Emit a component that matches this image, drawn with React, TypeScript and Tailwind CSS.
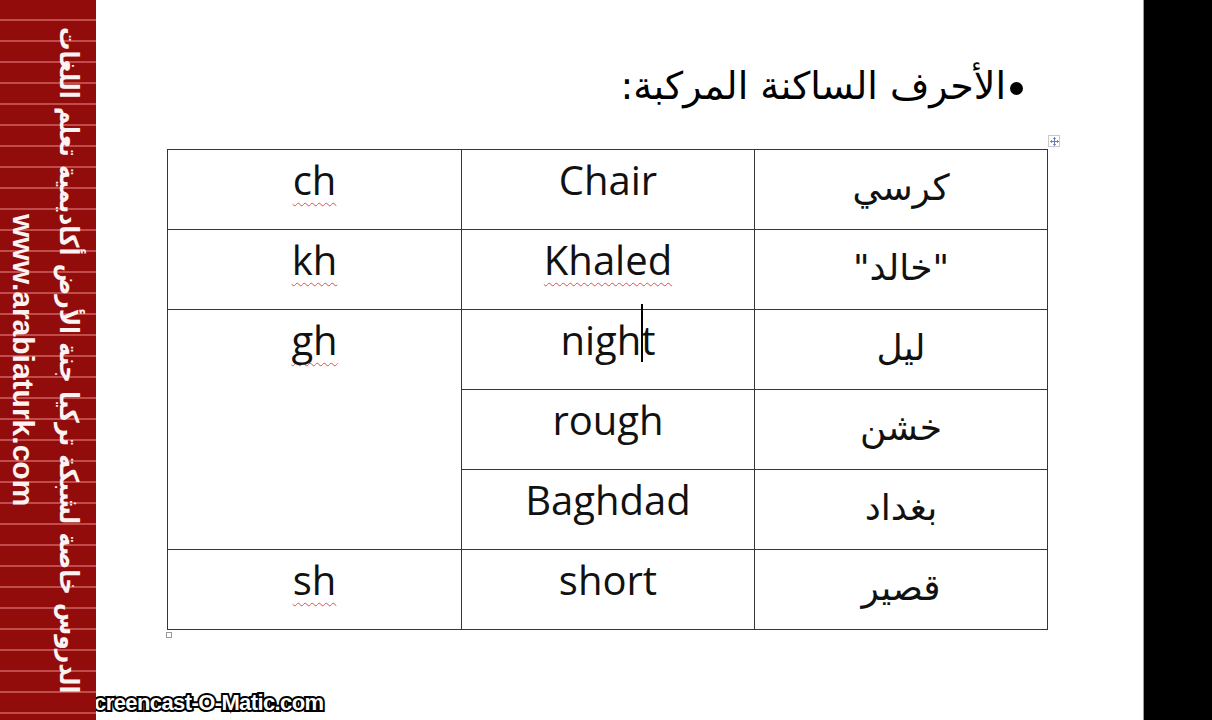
const squiggle =
  "underline decoration-wavy decoration-[#d9534f] decoration-1 underline-offset-[7px] [text-decoration-skip-ink:none]";

function EnCell({ text, wavy }: { text: string; wavy?: boolean }) {
  return <span className={wavy ? squiggle : ""}>{text}</span>;
}

function Sidebar() {
  return (
    <aside className="relative z-10 flex h-full w-[96px] shrink-0 flex-row items-stretch gap-[9px] bg-[repeating-linear-gradient(180deg,#930c0c_0px,#930c0c_19px,#c24b4b_19px,#c24b4b_21px)] pl-[8px] text-[#fdf2f2]">
      <div className="flex h-full w-[30px] items-center justify-center whitespace-nowrap font-['Liberation_Sans',sans-serif] text-[30px] font-bold leading-none [writing-mode:vertical-rl]">
        www.arabiaturk.com
      </div>
      <div
        dir="rtl"
        className="flex h-full w-[44px] items-center justify-center whitespace-nowrap font-['DejaVu_Sans_Condensed','DejaVu_Sans',sans-serif] text-[26px] font-bold leading-none [writing-mode:vertical-rl]"
      >
        الدروس خاصة لشبكة تركيا جنة الأرض أكاديمية تعلم اللغات
      </div>
    </aside>
  );
}

function TableHandle() {
  return (
    <span className="absolute right-[-13px] top-[-14px] flex h-[12px] w-[12px] items-center justify-center border border-[#c9c9c9] bg-white">
      <svg width="9" height="9" viewBox="0 0 9 9" fill="none" stroke="#5b7fb5" strokeWidth="1">
        <path d="M4.5 0.5v8M0.5 4.5h8" />
        <path d="M3.2 1.8l1.3-1.3 1.3 1.3M3.2 7.2l1.3 1.3 1.3-1.3M1.8 3.2L0.5 4.5l1.3 1.3M7.2 3.2l1.3 1.3-1.3 1.3" />
      </svg>
    </span>
  );
}

export default function App() {
  const td = "h-[80px] border border-[#363636] p-0 text-center align-top";
  const en = "font-['Open_Sans',sans-serif] text-[40px] leading-[48px] pt-[6px] text-[#111]";
  const ar = "font-['DejaVu_Sans',sans-serif] text-[36px] leading-[48px] pt-[14px] text-[#111]";

  return (
    <div className="relative flex h-[720px] w-[1212px] overflow-hidden bg-black">
      <Sidebar />

      <main className="flex h-full w-[1048px] flex-col border-r border-[#9a9a9a] bg-white">
        <div className="flex h-[149px] justify-end pr-[120px] pt-[62px]">
          <p dir="rtl" className="font-['DejaVu_Sans',sans-serif] text-[38px] leading-[48px] text-black">
            <span className="ml-[4px] inline-block h-[13px] w-[13px] rounded-full bg-black align-middle" />
            الأحرف الساكنة المركبة:
          </p>
        </div>

        <div className="relative ml-[71px] w-[880px]">
          <TableHandle />
          <table className="w-[880px] table-fixed border-collapse">
            <colgroup>
              <col className="w-[294px]" />
              <col className="w-[293px]" />
              <col className="w-[293px]" />
            </colgroup>
            <tbody>
              <tr>
                <td className={`${td} ${en}`}>
                  <EnCell text="ch" wavy />
                </td>
                <td className={`${td} ${en}`}>
                  <EnCell text="Chair" />
                </td>
                <td dir="rtl" className={`${td} ${ar}`}>
                  كرسي
                </td>
              </tr>
              <tr>
                <td className={`${td} ${en}`}>
                  <EnCell text="kh" wavy />
                </td>
                <td className={`${td} ${en}`}>
                  <EnCell text="Khaled" wavy />
                </td>
                <td dir="rtl" className={`${td} ${ar}`}>
                  "خالد"
                </td>
              </tr>
              <tr>
                <td rowSpan={3} className={`${td} ${en}`}>
                  <EnCell text="gh" wavy />
                </td>
                <td className={`${td} ${en}`}>
                  nigh
                  <span className="relative">
                    <span className="absolute left-0 top-[-8px] h-[58px] w-[2px] bg-black" />
                  </span>
                  t
                </td>
                <td dir="rtl" className={`${td} ${ar}`}>
                  ليل
                </td>
              </tr>
              <tr>
                <td className={`${td} ${en}`}>rough</td>
                <td dir="rtl" className={`${td} ${ar}`}>
                  خشن
                </td>
              </tr>
              <tr>
                <td className={`${td} ${en}`}>Baghdad</td>
                <td dir="rtl" className={`${td} ${ar}`}>
                  بغداد
                </td>
              </tr>
              <tr>
                <td className={`${td} ${en}`}>
                  <EnCell text="sh" wavy />
                </td>
                <td className={`${td} ${en}`}>short</td>
                <td dir="rtl" className={`${td} ${ar}`}>
                  قصير
                </td>
              </tr>
            </tbody>
          </table>
          <span className="absolute bottom-[-8px] left-[-1px] h-[6px] w-[6px] border border-[#9a9a9a] bg-white" />
        </div>
      </main>

      <div className="absolute bottom-[6px] left-[80px] font-['Liberation_Sans',sans-serif] text-[22px] font-bold leading-none tracking-[-0.6px] text-white [-webkit-text-stroke:4px_#000] [paint-order:stroke_fill]">
        Screencast-O-Matic.com
      </div>
    </div>
  );
}
